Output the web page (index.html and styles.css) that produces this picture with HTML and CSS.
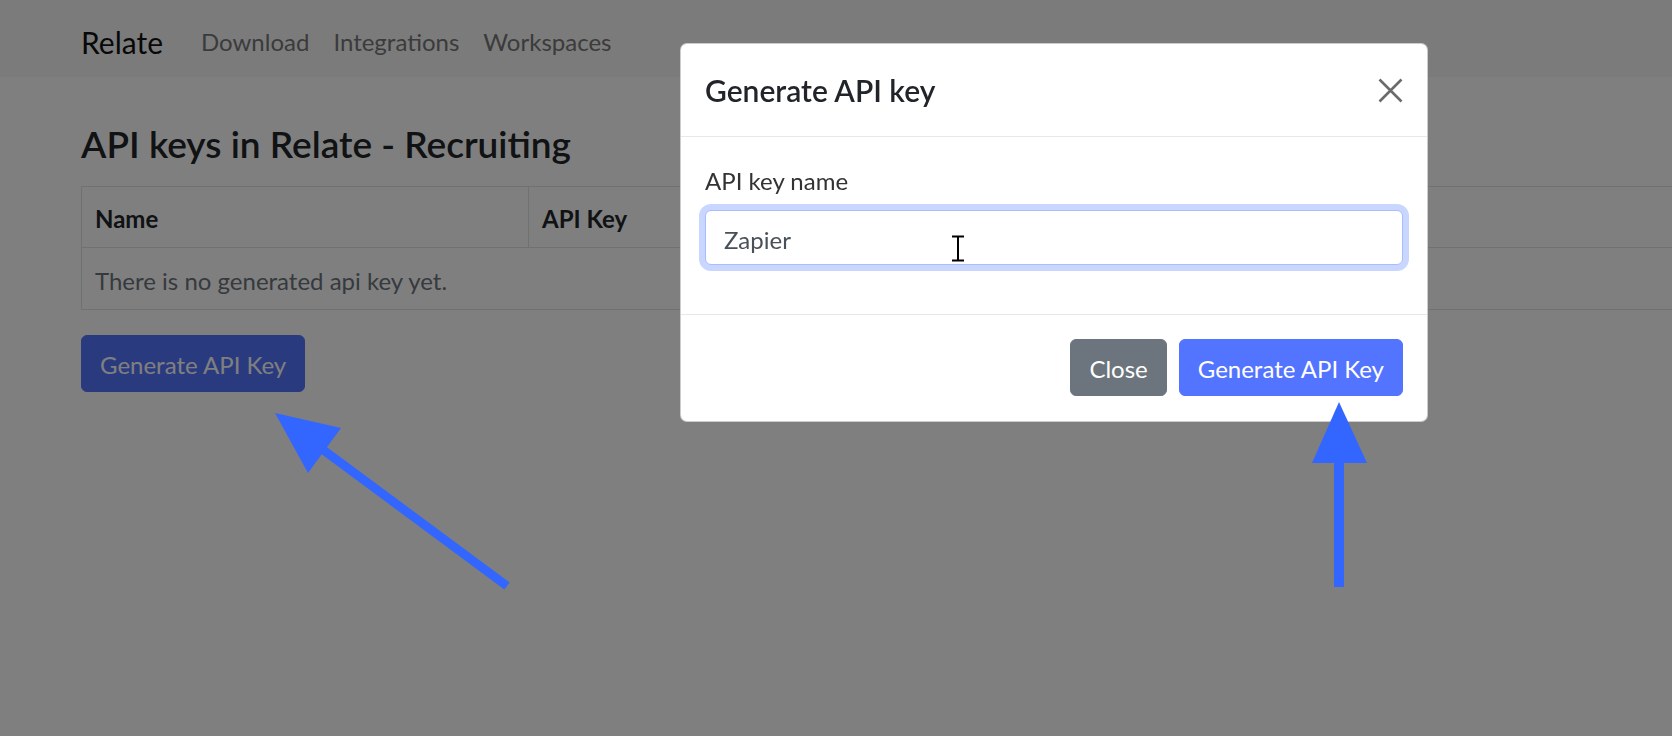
FILE: index.html
```html
<!DOCTYPE html>
<html lang="en">
<head>
<meta charset="utf-8">
<title>API keys in Relate - Recruiting</title>
<link rel="stylesheet" href="styles.css">
</head>
<body>
  <nav class="navbar">
    <a class="brand" href="#">Relate</a>
    <ul class="nav-links">
      <li><a href="#">Download</a></li>
      <li><a href="#">Integrations</a></li>
      <li><a href="#">Workspaces</a></li>
    </ul>
  </nav>

  <main class="page">
    <h3 class="page-title">API keys in Relate - Recruiting</h3>
    <table class="keys-table">
      <thead>
        <tr><th class="col-name">Name</th><th>API Key</th></tr>
      </thead>
      <tbody>
        <tr><td colspan="2" class="empty">There is no generated api key yet.</td></tr>
      </tbody>
    </table>
    <button class="btn btn-primary page-btn" type="button">Generate API Key</button>
  </main>

  <div class="backdrop"></div>

  <div class="modal-layer">
    <div class="modal-dialog">
      <div class="modal-header">
        <h5 class="modal-title">Generate API key</h5>
        <button class="close-x" type="button" aria-label="Close">
          <svg width="25" height="25" viewBox="0 0 25 25"><path d="M1.5 1.5 L23.5 23.5 M23.5 1.5 L1.5 23.5" stroke="#6b6b6b" stroke-width="2.6" fill="none"/></svg>
        </button>
      </div>
      <div class="modal-body">
        <div class="form-group">
          <label class="form-label" for="keyname">API key name</label>
          <input class="form-input" id="keyname" type="text" value="Zapier">
        </div>
      </div>
      <div class="modal-footer">
        <button class="btn btn-secondary" type="button">Close</button>
        <button class="btn btn-primary" type="button">Generate API Key</button>
      </div>
    </div>
  </div>

  <svg class="annotations" width="1672" height="736" viewBox="0 0 1672 736">
    <g fill="#3366ff">
      <polygon points="275,413 341,428 308,473"/>
      <line x1="322" y1="449" x2="507" y2="586" stroke="#3366ff" stroke-width="9"/>
      <polygon points="1339,402 1312,463 1367,463"/>
      <rect x="1334" y="462" width="10" height="125"/>
    </g>
    <g class="ibeam">
      <path d="M951 236.5 H965 M951 260.5 H965 M958 236.5 V260.5" stroke="#ffffff" stroke-width="4" fill="none"/>
      <path d="M952 236.5 H964 M952 260.5 H964 M958 236.5 V260.5" stroke="#000000" stroke-width="2" fill="none"/>
    </g>
  </svg>
</body>
</html>
```

FILE: styles.css
```css
* { box-sizing: border-box; }

html, body {
  margin: 0;
  padding: 0;
  width: 1672px;
  height: 736px;
  overflow: hidden;
  background: #ffffff;
  font-family: "Lato", "Liberation Sans", sans-serif;
  color: #212529;
}

.navbar {
  display: flex;
  align-items: center;
  height: 77px;
  padding: 7px 0 0 81px;
  background: #f6f6f6;
}

.brand {
  font-size: 30px;
  line-height: 45px;
  color: #111111;
  text-decoration: none;
  margin-right: 26px;
}

.nav-links {
  display: flex;
  list-style: none;
  margin: 0;
  padding: 0;
}

.nav-links a {
  display: block;
  padding: 0 12px;
  font-size: 24px;
  line-height: 36px;
  color: #777777;
  text-decoration: none;
}

.page {
  padding-left: 81px;
}

.page-title {
  margin: 45px 0 20px;
  font-size: 37px;
  line-height: 44px;
  font-weight: 600;
  color: #212529;
}

.keys-table {
  width: 1700px;
  border-collapse: collapse;
  font-size: 24px;
  line-height: 36px;
}

.keys-table th,
.keys-table td {
  border: 1px solid #dee2e6;
  padding: 15px 13px 10px;
  text-align: left;
}

.keys-table th {
  padding-top: 14px;
  font-weight: 700;
  color: #212529;
}

.keys-table .col-name { width: 447px; }

.keys-table td.empty {
  color: #6c757d;
  border-right: none;
}

.btn {
  font-family: inherit;
  font-size: 24px;
  line-height: 36px;
  padding: 11px 18px 8px;
  border: 1px solid transparent;
  border-radius: 6px;
  color: #ffffff;
  cursor: pointer;
}

.btn-primary { background: #5274ff; border-color: #5274ff; }
.btn-secondary { background: #6c757d; border-color: #6c757d; }

.page-btn {
  display: block;
  margin-top: 25px;
}

.backdrop {
  position: fixed;
  inset: 0;
  background: rgba(0, 0, 0, 0.5);
}

.modal-layer {
  position: fixed;
  inset: 0;
  padding: 43px 0 0 680px;
}

.modal-dialog {
  width: 748px;
  background: #ffffff;
  border: 1px solid rgba(0, 0, 0, 0.2);
  border-radius: 7px;
  overflow: hidden;
}

.modal-header {
  display: flex;
  align-items: center;
  justify-content: space-between;
  padding: 24px 24px 23px;
  border-bottom: 1px solid #e6e8ea;
}

.modal-title {
  margin: 0;
  font-size: 30px;
  line-height: 45px;
  font-weight: 600;
  color: #212529;
}

.close-x {
  display: flex;
  padding: 0;
  border: 0;
  background: none;
  width: 25px;
  height: 25px;
}

.modal-body {
  padding: 26px 24px 24px;
}

.form-group {
  margin-bottom: 25px;
}

.form-label {
  display: block;
  font-size: 24px;
  line-height: 36px;
  color: #333333;
  margin-bottom: 11px;
}

.form-input {
  display: block;
  width: 100%;
  height: 55px;
  padding: 10px 18px 6px;
  font-family: inherit;
  font-size: 24px;
  line-height: 36px;
  color: #495057;
  background: #ffffff;
  border: 1px solid #a9bcff;
  border-radius: 6px;
  outline: none;
  box-shadow: 0 0 0 6px #c9d6ff;
}

.modal-footer {
  display: flex;
  justify-content: flex-end;
  padding: 18px 18px 19px;
  border-top: 1px solid #e6e8ea;
}

.modal-footer .btn { margin: 6px; }

.annotations {
  position: fixed;
  left: 0;
  top: 0;
  pointer-events: none;
}
```
